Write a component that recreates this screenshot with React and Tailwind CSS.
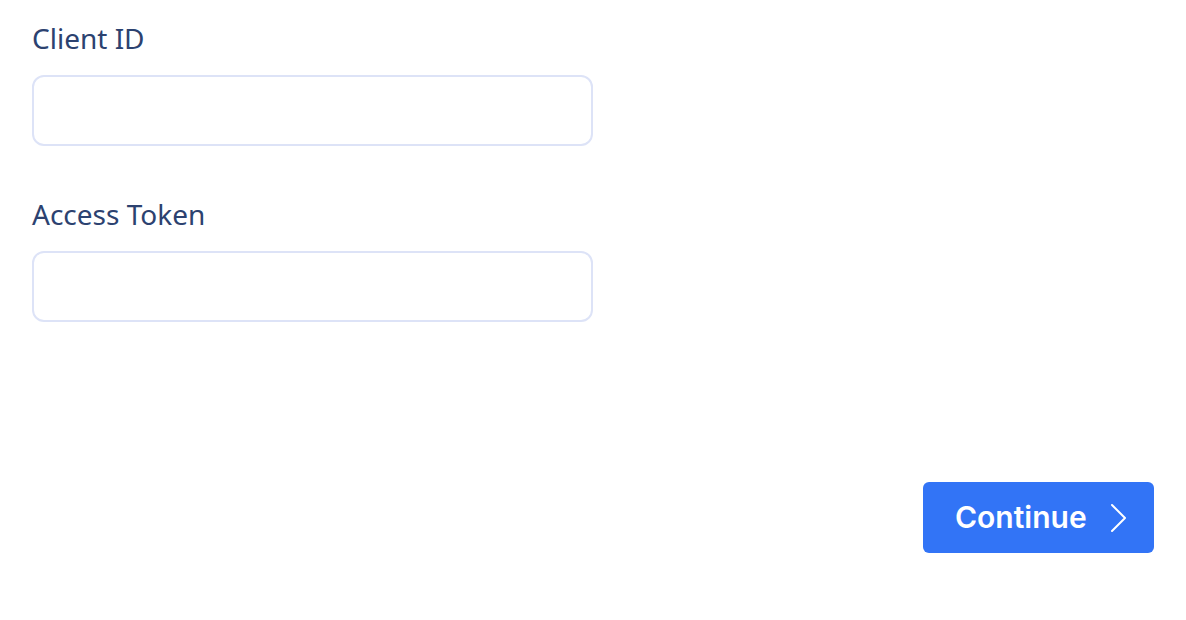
export default function App() {
  return (
    <div className="w-[1186px] h-[620px] bg-white flex flex-col px-[32px] pt-[18px]" style={{ fontFamily: '"Noto Sans", sans-serif' }}>
      <label className="text-[28px] leading-[40px] text-[#2c4270] h-[40px]">Client ID</label>
      <input className="mt-[17px] w-[561px] h-[71px] rounded-[12px] border-2 border-[#dde3f7] outline-none" />
      <label className="mt-[48px] text-[28px] leading-[40px] text-[#2c4270] h-[40px]">Access Token</label>
      <input className="mt-[17px] w-[561px] h-[71px] rounded-[12px] border-2 border-[#dde3f7] outline-none" />
      <div className="flex justify-end mt-[160px]">
        <button className="w-[231px] h-[71px] rounded-[6px] bg-[#3274f6] text-white flex items-center pl-[32px]" style={{ fontFamily: 'Inter, sans-serif' }}>
          <span className="text-[30px] font-semibold">Continue</span>
          <svg className="ml-[22px]" width="18" height="30" viewBox="0 0 18 30" fill="none" stroke="white" strokeWidth="2" strokeLinecap="round" strokeLinejoin="round">
            <path d="M3 2 L16 15 L3 28" />
          </svg>
        </button>
      </div>
    </div>
  );
}
